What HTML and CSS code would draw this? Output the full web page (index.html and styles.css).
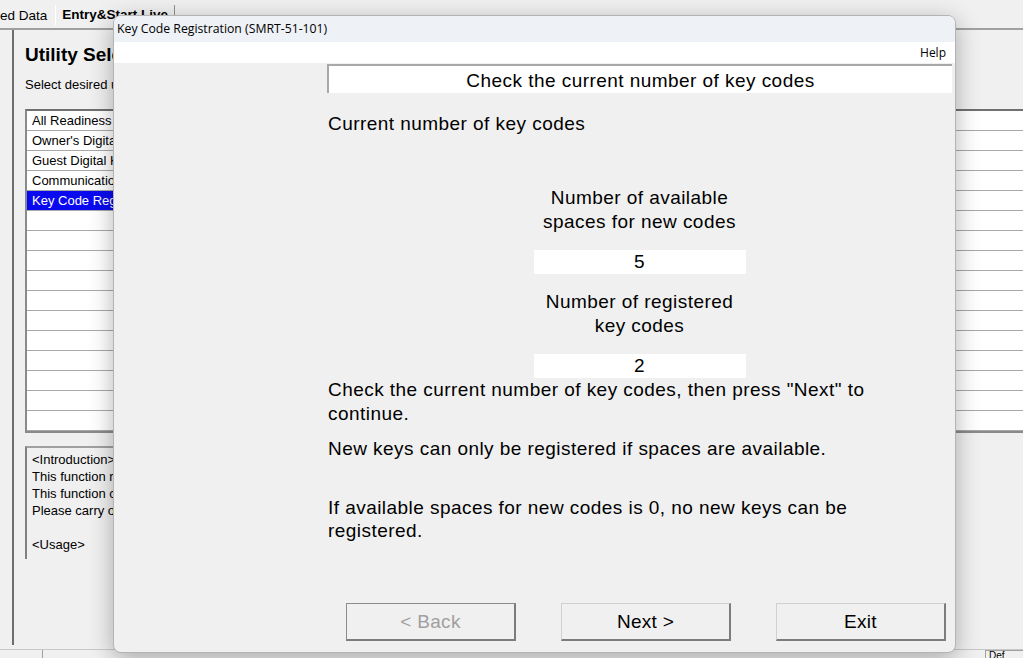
FILE: index.html
```html
<!DOCTYPE html>
<html lang="en">
<head>
    <meta charset="UTF-8">
    <meta name="viewport" content="width=device-width, initial-scale=1.0">
    <title>Key Code Registration</title>
    <link rel="stylesheet" href="styles.css">
</head>
<body>
    <div class="app">
        <div class="tabs">
            <div class="tab">ed Data</div>
            <div class="tab active">Entry&amp;Start Live</div>
        </div>
        <div class="panel">
            <h1>Utility Selection</h1>
            <p class="hint">Select desired utility and press "Start".</p>
            <div class="list">
                <div class="row"><span class="cell">All Readiness Check</span></div>
                <div class="row"><span class="cell">Owner's Digital Key Registration</span></div>
                <div class="row"><span class="cell">Guest Digital Key Registration</span></div>
                <div class="row"><span class="cell">Communication Check</span></div>
                <div class="row"><span class="cell selected">Key Code Registration</span></div>
                <div class="row"></div>
                <div class="row"></div>
                <div class="row"></div>
                <div class="row"></div>
                <div class="row"></div>
                <div class="row"></div>
                <div class="row"></div>
                <div class="row"></div>
                <div class="row"></div>
                <div class="row"></div>
                <div class="row"></div>
            </div>
            <div class="desc">
                <div>&lt;Introduction&gt;</div>
                <div>This function registers key codes.</div>
                <div>This function can be used for new keys.</div>
                <div>Please carry out the procedure.</div>
                <div>&nbsp;</div>
                <div>&lt;Usage&gt;</div>
            </div>
        </div>
        <div class="status">
            <div class="status-cell first"></div>
            <div class="status-cell grow"></div>
            <div class="status-cell last">Def</div>
        </div>
    </div>

    <div class="dialog">
        <div class="titlebar">Key Code Registration (SMRT-51-101)</div>
        <div class="menubar"><span>Help</span></div>
        <div class="dlg-body">
            <div class="step-title">Check the current number of key codes</div>
            <p class="lead">Current number of key codes</p>
            <div class="counts">
                <div class="count-label">Number of available<br>spaces for new codes</div>
                <div class="count-value">5</div>
                <div class="count-label">Number of registered<br>key codes</div>
                <div class="count-value">2</div>
            </div>
            <p class="note">Check the current number of key codes, then press "Next" to continue.</p>
            <p class="note gap-s">New keys can only be registered if spaces are available.</p>
            <p class="note gap-l">If available spaces for new codes is 0, no new keys can be registered.</p>
        </div>
        <div class="buttons">
            <button class="btn" disabled>&lt; Back</button>
            <button class="btn">Next &gt;</button>
            <button class="btn">Exit</button>
        </div>
    </div>
</body>
</html>
```

FILE: styles.css
```css
body {
    margin: 0;
    padding: 0;
    background-color: #f0f0f0;
    font-family: "Liberation Sans", Arial, sans-serif;
    overflow: hidden;
}
.app {
    width: 1023px;
    height: 658px;
    display: flex;
    flex-direction: column;
}

/* background window */
.tabs {
    height: 30px;
    display: flex;
    align-items: flex-end;
    border-bottom: 2px solid #a0a0a0;
    box-sizing: border-box;
    font-size: 13.5px;
}
.tab {
    height: 22px;
    line-height: 20px;
    padding: 0 8px 0 0;
    color: #000;
}
.tab.active {
    font-weight: bold;
    padding: 0 6px 0 6px;
    margin-left: 0;
    border-left: 1px solid #fff;
    border-right: 1px solid #909090;
    height: 20px;
    margin-bottom: 3px;
}
.panel {
    flex: 1;
    margin-left: 12px;
    margin-bottom: 4px;
    border-left: 2px solid #6e6e6e;
    padding-left: 11px;
    overflow: hidden;
}
h1 {
    margin: 13px 0 0;
    font-size: 19px;
    line-height: 24px;
    color: #000;
}
.hint {
    margin: 10px 0 0;
    font-size: 13px;
    line-height: 16px;
    color: #000;
}
.list {
    margin-top: 16px;
    border-top: 2px solid #707070;
    border-left: 2px solid #8a8a8a;
    border-bottom: 2px solid #8a8a8a;
    background-color: #fff;
    width: 1010px;
}
.row {
    height: 19px;
    border-bottom: 1px solid #a8a8a8;
    font-size: 13px;
    color: #000;
    white-space: nowrap;
}
.cell {
    display: block;
    width: 380px;
    height: 19px;
    line-height: 19px;
    padding-left: 5px;
    overflow: hidden;
}
.cell.selected {
    background-color: #0a0af0;
    color: #fff;
}
.desc {
    margin-top: 13px;
    width: 420px;
    height: 113px;
    border-top: 2px solid #a0a0a0;
    border-left: 2px solid #808080;
    padding: 3px 5px;
    box-sizing: border-box;
    font-size: 13px;
    line-height: 17px;
    color: #000;
}
.status {
    height: 8px;
    border-top: 1px solid #c8c8c8;
    display: flex;
    font-size: 10px;
}
.status-cell.first {
    width: 42px;
    border-right: 1px solid #a0a0a0;
}
.status-cell.grow {
    flex: 1;
}
.status-cell.last {
    width: 34px;
    border-left: 1px solid #a0a0a0;
    border-top: 1px solid #a0a0a0;
    line-height: 10px;
    padding-left: 3px;
    overflow: hidden;
}

/* dialog window */
.dialog {
    position: absolute;
    left: 113px;
    top: 15px;
    width: 843px;
    height: 638px;
    box-sizing: border-box;
    border: 1px solid #b4b4b4;
    border-radius: 8px;
    background-color: #f0f0f0;
    box-shadow: 0 6px 24px rgba(0, 0, 0, 0.3);
    display: flex;
    flex-direction: column;
    overflow: hidden;
}
.titlebar {
    height: 26px;
    line-height: 26px;
    padding-left: 3px;
    background-color: #eef1f6;
    font-family: "Open Sans", "Noto Sans", sans-serif;
    font-size: 12.25px;
    color: #000;
}
.menubar {
    height: 21px;
    background-color: #fff;
    text-align: right;
    padding-right: 9px;
    font-family: "Open Sans", "Noto Sans", sans-serif;
    font-size: 12px;
    line-height: 21px;
    color: #000;
}
.dlg-body {
    flex: 1;
    margin-left: 213px;
    margin-right: 3px;
    font-size: 19px;
    letter-spacing: 0.45px;
    color: #000;
}
.step-title {
    margin-top: 1px;
    height: 29px;
    line-height: 29px;
    box-sizing: border-box;
    background-color: #fff;
    border-top: 2px solid #a8a8a8;
    border-left: 2px solid #a8a8a8;
    text-align: center;
}
.lead {
    margin: 19px 0 0 1px;
    line-height: 24px;
}
.counts {
    width: 212px;
    margin: 50px auto 0;
    text-align: center;
}
.count-label {
    line-height: 24px;
    margin: 16px -20px 0;
}
.count-label:first-child {
    margin-top: 0;
}
.count-value {
    margin-top: 16px;
    height: 24px;
    line-height: 24px;
    background-color: #fff;
}
.note {
    margin: 0 0 0 1px;
    max-width: 570px;
    line-height: 23.5px;
}
.note.gap-s {
    margin-top: 12px;
}
.note.gap-l {
    margin-top: 35px;
}
.buttons {
    display: flex;
    gap: 45px;
    padding-left: 232px;
    margin-bottom: 11px;
}
.btn {
    width: 170px;
    height: 38px;
    box-sizing: border-box;
    background-color: #f0f0f0;
    border-top: 1px solid #d0d0d0;
    border-left: 1px solid #d0d0d0;
    border-right: 2px solid #7c7c7c;
    border-bottom: 2px solid #7c7c7c;
    font-family: "Liberation Sans", Arial, sans-serif;
    font-size: 19px;
    letter-spacing: 0.3px;
    color: #000;
    padding: 0;
}
.btn:disabled {
    color: #a0a0a0;
    border-top-color: #8c8c8c;
    border-left-color: #8c8c8c;
}
```
